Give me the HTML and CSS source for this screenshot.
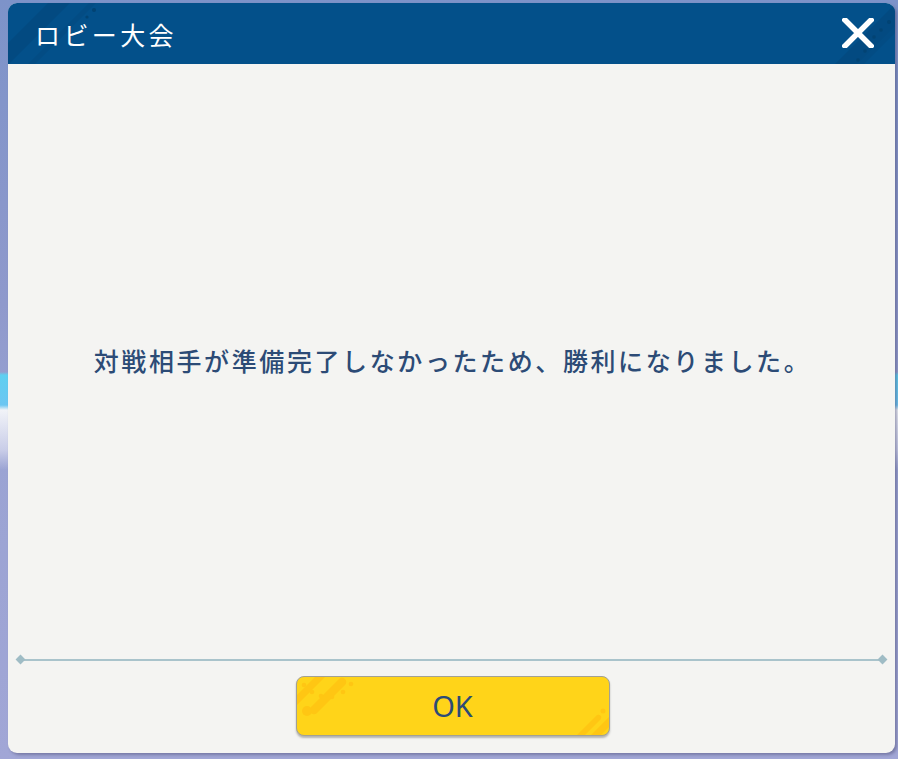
FILE: index.html
```html
<!DOCTYPE html>
<html lang="ja">
<head>
<meta charset="utf-8">
<link rel="stylesheet" href="styles.css">
</head>
<body>
<div class="stage">
  <div class="dialog">
    <header class="dialog-header">
      <svg class="hdr-deco-left" width="120" height="61" viewBox="0 0 120 61">
        <path d="M0 40 L40 0 L62 0 L0 62 Z" fill="#034a81"/>
        <path d="M20 61 L81 0 L88 0 L27 61 Z" fill="#034c84"/>
        <circle cx="86" cy="7" r="2" fill="#024373"/>
        <circle cx="79" cy="14" r="1.6" fill="#024373"/>
        <circle cx="62" cy="30" r="1.6" fill="#024373"/>
      </svg>
      <svg class="hdr-deco-right" width="110" height="61" viewBox="0 0 110 61">
        <path d="M50 61 L110 1 L110 25 L74 61 Z" fill="#034a81"/>
        <path d="M72 61 L110 23 L110 30 L79 61 Z" fill="#034c84"/>
        <circle cx="104" cy="19" r="2" fill="#024373"/>
        <circle cx="96" cy="27" r="1.8" fill="#024373"/>
        <circle cx="89" cy="34" r="1.8" fill="#024373"/>
        <circle cx="80" cy="48" r="1.8" fill="#024373"/>
        <circle cx="73" cy="57" r="1.8" fill="#024373"/>
      </svg>
      <h1 class="dialog-title">ロビー大会</h1>
      <button class="close-btn" aria-label="閉じる">
        <svg width="32" height="30" viewBox="0 0 32 30">
          <path d="M3 2 L29 28 M29 2 L3 28" stroke="#ffffff" stroke-width="5.5" stroke-linecap="square"/>
        </svg>
      </button>
    </header>
    <main class="dialog-body">
      <p class="message">対戦相手が準備完了しなかったため、勝利になりました。</p>
    </main>
    <footer class="dialog-footer">
      <div class="separator"></div>
      <button class="ok-btn">
        <svg class="ok-deco-tl" width="60" height="40" viewBox="0 0 60 40">
          <path d="M0 18 L18 0 L28 0 L0 28 Z" fill="#ffc613"/>
          <path d="M14 30 L42 2 A4 4 0 0 1 48 8 L20 36 A4 4 0 0 1 14 30 Z" fill="#ffc613"/>
          <circle cx="7" cy="8" r="2.3" fill="#ffc613"/>
          <circle cx="15" cy="15" r="2.3" fill="#ffc613"/>
          <circle cx="24" cy="19" r="2.3" fill="#ffc613"/>
          <circle cx="35" cy="20" r="2.3" fill="#ffc613"/>
          <circle cx="46" cy="15" r="2.3" fill="#ffc613"/>
          <circle cx="54" cy="7" r="2.3" fill="#ffc613"/>
          <circle cx="10" cy="34" r="5" fill="#ffc613"/>
        </svg>
        <svg class="ok-deco-br" width="36" height="30" viewBox="0 0 36 30">
          <path d="M4 30 L24 10 A3 3 0 0 1 28 14 L12 30 Z" fill="#ffc613"/>
          <path d="M18 30 L36 12 L36 22 L28 30 Z" fill="#ffc613"/>
          <circle cx="30" cy="6" r="2.5" fill="#ffc613"/>
        </svg>
        <span class="ok-label">OK</span>
      </button>
    </footer>
  </div>
</div>
</body>
</html>
```

FILE: styles.css
```css
* { box-sizing: border-box; }

html, body {
  margin: 0;
  padding: 0;
  width: 898px;
  height: 759px;
  overflow: hidden;
}

body {
  background:
    linear-gradient(180deg, transparent 0, transparent 372px, #5fcff0 375px, #6cc6f2 405px, #f1f3f8 410px, #c9cde8 450px, transparent 470px),
    linear-gradient(180deg, #7d93c9 0%, #8f99cc 40%, #9aa3d3 60%, #a1a6d6 100%);
  font-family: "Noto Sans CJK JP", "Noto Sans", sans-serif;
}

.stage {
  padding: 3px 3px 6px 8px;
  height: 759px;
  display: flex;
}

.dialog {
  flex: 1;
  display: flex;
  flex-direction: column;
  background: #f4f4f2;
  border-radius: 9px;
  overflow: hidden;
  box-shadow: 2px 2px 3px rgba(70, 70, 110, 0.45);
}

.dialog-header {
  position: relative;
  height: 61px;
  background: #03508a;
  display: flex;
  align-items: center;
  justify-content: space-between;
  padding: 0 21px 0 27px;
  flex-shrink: 0;
}

.hdr-deco-left {
  position: absolute;
  left: 0;
  top: 0;
}

.hdr-deco-right {
  position: absolute;
  right: 0;
  top: 0;
}

.dialog-title {
  position: relative;
  margin: 0;
  color: #ffffff;
  font-size: 25px;
  font-weight: 400;
  letter-spacing: 3.4px;
  line-height: 1;
  margin-top: 1px;
}

.close-btn {
  position: relative;
  border: 0;
  background: none;
  padding: 0;
  width: 32px;
  height: 30px;
  display: flex;
  margin-top: -1px;
}

.dialog-body {
  flex: 1;
  display: flex;
  align-items: center;
  justify-content: center;
}

.message {
  margin: 0 0 4px 0;
  color: #2c4b76;
  font-size: 25px;
  font-weight: 500;
  letter-spacing: 2.6px;
  line-height: 1.2;
  padding-left: 2px;
}

.dialog-footer {
  display: flex;
  flex-direction: column;
  align-items: center;
  padding: 0 0 17px 0;
  flex-shrink: 0;
}

.separator {
  position: relative;
  align-self: stretch;
  margin: 0 12px;
  height: 2px;
  background: #a9c3cb;
}

.separator::before,
.separator::after {
  content: "";
  position: absolute;
  top: -3px;
  width: 7px;
  height: 7px;
  background: #9fbcc5;
  transform: rotate(45deg);
}

.separator::before { left: -3px; }
.separator::after { right: -3px; }

.ok-btn {
  position: relative;
  margin-top: 15px;
  width: 314px;
  height: 60px;
  background: #ffd419;
  border: 1px solid #a3a194;
  border-radius: 8px;
  box-shadow: 0 2px 2px rgba(60, 60, 60, 0.35);
  display: flex;
  align-items: center;
  justify-content: center;
  overflow: hidden;
  padding: 0;
  margin-left: 2px;
}

.ok-deco-tl {
  position: absolute;
  left: 0;
  top: 0;
}

.ok-deco-br {
  position: absolute;
  right: 0;
  bottom: 0;
}

.ok-label {
  position: relative;
  font-family: "Noto Sans", "Liberation Sans", sans-serif;
  font-size: 29px;
  color: #2c4b76;
  line-height: 1;
  margin-top: -2px;
}
```
